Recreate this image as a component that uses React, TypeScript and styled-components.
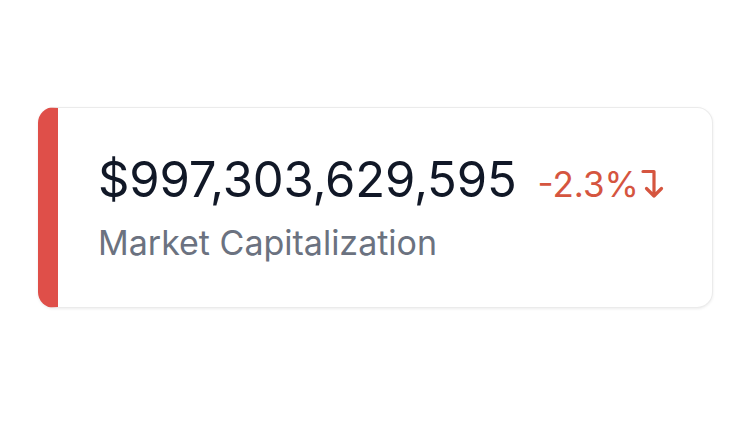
import React from "react";
import styled, { createGlobalStyle } from "styled-components";

const GlobalStyle = createGlobalStyle`
  html, body {
    margin: 0;
    padding: 0;
    background: #ffffff;
  }
  body {
    font-family: Inter, "Noto Sans", "Liberation Sans", sans-serif;
  }
`;

const Page = styled.div`
  width: 750px;
  height: 422px;
  box-sizing: border-box;
  padding: 107px 37px 0 38px;
`;

const Card = styled.div<{ accent: string }>`
  display: flex;
  flex-direction: column;
  box-sizing: border-box;
  height: 201px;
  padding: 45px 40px 0 40px;
  background: #ffffff;
  border: 1px solid #ebebeb;
  border-left: 20px solid ${(p) => p.accent};
  border-radius: 16px;
  box-shadow: 0 1px 3px rgba(0, 0, 0, 0.08);
`;

const ValueRow = styled.div`
  display: flex;
  align-items: baseline;
  gap: 21px;
`;

const Value = styled.div`
  font-size: 49px;
  font-weight: 400;
  color: #111827;
  letter-spacing: -0.2px;
  line-height: 1.1;
`;

const Change = styled.div<{ color: string }>`
  display: flex;
  align-items: baseline;
  font-size: 35px;
  font-weight: 400;
  color: ${(p) => p.color};
`;

const Arrow = styled.svg`
  width: 24px;
  height: 32px;
  margin-left: 2px;
  align-self: center;
`;

const Label = styled.div`
  margin-top: 16px;
  font-size: 34px;
  color: #6b7280;
  line-height: 1.2;
`;

export default function App() {
  const down = "#d5553f";
  return (
    <>
      <GlobalStyle />
      <Page>
        <Card accent="#df4f49">
          <ValueRow>
            <Value>$997,303,629,595</Value>
            <Change color={down}>
              -2.3%
              <Arrow viewBox="0 0 24 32" fill="none">
                <path
                  d="M2 3.5 H13 V28 M5.5 20.5 L13 28 L20.5 20.5"
                  stroke={down}
                  strokeWidth="3.2"
                  strokeLinecap="round"
                  strokeLinejoin="round"
                />
              </Arrow>
            </Change>
          </ValueRow>
          <Label>Market Capitalization</Label>
        </Card>
      </Page>
    </>
  );
}
